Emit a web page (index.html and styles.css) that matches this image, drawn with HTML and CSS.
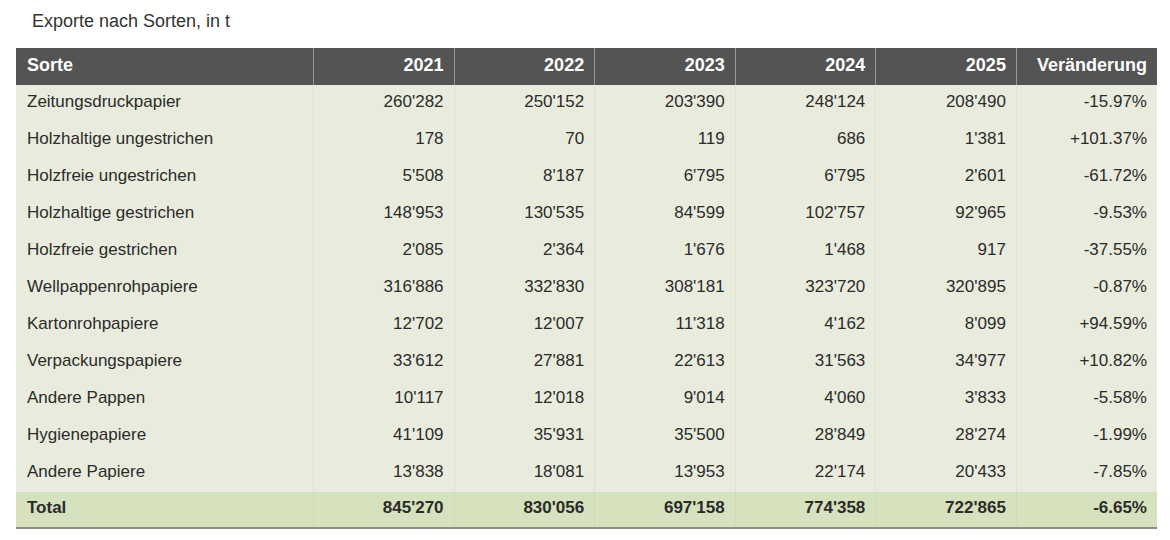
FILE: index.html
```html
<!DOCTYPE html>
<html lang="de">
<head>
<meta charset="utf-8">
<title>Exporte nach Sorten</title>
<link rel="stylesheet" href="styles.css">
</head>
<body>
<div class="wrap">
  <h1 class="title">Exporte nach Sorten, in t</h1>
  <table class="data">
    <thead>
      <tr><th class="name">Sorte</th><th>2021</th><th>2022</th><th>2023</th><th>2024</th><th>2025</th><th>Veränderung</th></tr>
    </thead>
    <tbody>
      <tr><td class="name">Zeitungsdruckpapier</td><td>260'282</td><td>250'152</td><td>203'390</td><td>248'124</td><td>208'490</td><td>-15.97%</td></tr>
      <tr><td class="name">Holzhaltige ungestrichen</td><td>178</td><td>70</td><td>119</td><td>686</td><td>1'381</td><td>+101.37%</td></tr>
      <tr><td class="name">Holzfreie ungestrichen</td><td>5'508</td><td>8'187</td><td>6'795</td><td>6'795</td><td>2'601</td><td>-61.72%</td></tr>
      <tr><td class="name">Holzhaltige gestrichen</td><td>148'953</td><td>130'535</td><td>84'599</td><td>102'757</td><td>92'965</td><td>-9.53%</td></tr>
      <tr><td class="name">Holzfreie gestrichen</td><td>2'085</td><td>2'364</td><td>1'676</td><td>1'468</td><td>917</td><td>-37.55%</td></tr>
      <tr><td class="name">Wellpappenrohpapiere</td><td>316'886</td><td>332'830</td><td>308'181</td><td>323'720</td><td>320'895</td><td>-0.87%</td></tr>
      <tr><td class="name">Kartonrohpapiere</td><td>12'702</td><td>12'007</td><td>11'318</td><td>4'162</td><td>8'099</td><td>+94.59%</td></tr>
      <tr><td class="name">Verpackungspapiere</td><td>33'612</td><td>27'881</td><td>22'613</td><td>31'563</td><td>34'977</td><td>+10.82%</td></tr>
      <tr><td class="name">Andere Pappen</td><td>10'117</td><td>12'018</td><td>9'014</td><td>4'060</td><td>3'833</td><td>-5.58%</td></tr>
      <tr><td class="name">Hygienepapiere</td><td>41'109</td><td>35'931</td><td>35'500</td><td>28'849</td><td>28'274</td><td>-1.99%</td></tr>
      <tr><td class="name">Andere Papiere</td><td>13'838</td><td>18'081</td><td>13'953</td><td>22'174</td><td>20'433</td><td>-7.85%</td></tr>
    </tbody>
    <tfoot>
      <tr><td class="name">Total</td><td>845'270</td><td>830'056</td><td>697'158</td><td>774'358</td><td>722'865</td><td>-6.65%</td></tr>
    </tfoot>
  </table>
</div>
</body>
</html>
```
FILE: styles.css
```css
html, body {
  margin: 0;
  padding: 0;
  background: #ffffff;
}
body {
  font-family: "Liberation Sans", Arial, sans-serif;
  color: #2b2b2b;
}
.wrap {
  padding: 9px 13px 0 16px;
}
.title {
  margin: 0 0 15px 16px;
  font-size: 18px;
  font-weight: normal;
  line-height: 24px;
  color: #333333;
}
.data {
  width: 100%;
  border-collapse: collapse;
  table-layout: fixed;
  font-size: 17px;
}
.data th,
.data td {
  text-align: right;
  padding: 0 10px 3px 10px;
  height: 34px;
  white-space: nowrap;
}
.data th.name,
.data td.name {
  text-align: left;
  width: 276px;
  padding-left: 11px;
}
.data thead th {
  background: #545454;
  color: #ffffff;
  font-weight: bold;
  font-size: 18px;
  border-left: 1px solid #9a9a9a;
}
.data thead th:first-child {
  border-left: none;
}
.data tbody td {
  background: #e9ecdd;
  border-left: 1px solid #dde1d0;
}
.data tbody td:first-child,
.data tfoot td:first-child {
  border-left: none;
}
.data tfoot td {
  background: #d6e1bd;
  font-weight: bold;
  height: 32px;
  border-left: 1px solid #d0dbb6;
  border-bottom: 2px solid #8a8f86;
}
```
